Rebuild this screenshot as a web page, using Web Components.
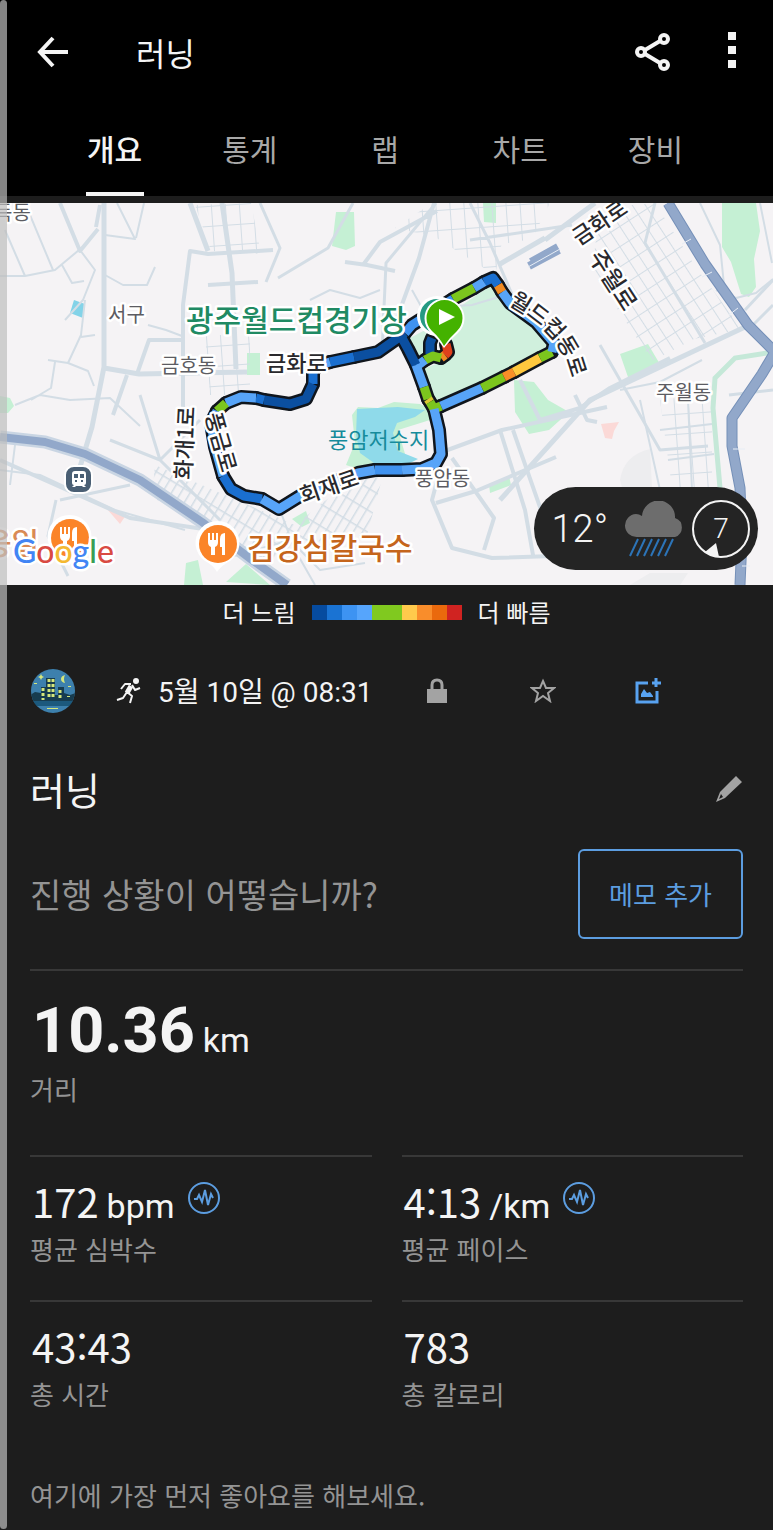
<!DOCTYPE html>
<html lang="ko">
<head>
<meta charset="utf-8">
<meta name="viewport" content="width=device-width, initial-scale=1">
<title>러닝</title>
<style>
  body {
    margin: 0;
    background: #1d1d1d;
    color: #f4f4f4;
    font-family: "Noto Sans CJK KR", "Noto Sans", sans-serif;
  }
</style>
</head>
<body>
<activity-page></activity-page>

<script>
class AppBar extends HTMLElement {
  constructor() {
    super();
    this.attachShadow({ mode: 'open' });
    this.render();
  }

  render() {
    this.shadowRoot.innerHTML = /* html */ `
    <style>
      :host { display: flex; align-items: center; height: 104px; padding: 0 21px 0 32px; }
      button { display: flex; justify-content: center; padding: 0; border: 0; background: none; color: #f4f4f4; }
      h1 { flex: 1; margin: 0 0 0 62px; font-size: 32px; line-height: 44px; font-weight: 400; }
      .actions { display: flex; gap: 40px; }
      .more { width: 40px; }
    </style>
    <button aria-label="뒤로">
      <svg width="42" height="36" viewBox="0 0 42 36" fill="none" stroke="currentColor" stroke-width="4"><path d="M36 18H9M21 4 8 18l13 14"/></svg>
    </button>
    <h1><slot></slot></h1>
    <div class="actions">
      <button aria-label="공유">
        <svg width="38" height="40" viewBox="0 0 38 40" fill="none" stroke="currentColor" stroke-width="4"><path d="M11 18 26 9M11 22l15 9"/><circle cx="7" cy="20" r="4"/><circle cx="30" cy="7" r="4"/><circle cx="30" cy="33" r="4"/></svg>
      </button>
      <button class="more" aria-label="더보기">
        <svg width="8" height="36" viewBox="0 0 8 36" fill="currentColor"><path d="M0 0h8v8H0zM0 14h8v8H0zM0 28h8v8H0z"/></svg>
      </button>
    </div>
    `;
  }
}

class TabItem extends HTMLElement {
  constructor() {
    super();
    this.attachShadow({ mode: 'open' });
    this.shadowRoot.innerHTML = /* html */ `
    <style>
      :host { display: flex; justify-content: center; }
      button {
        height: 92px;
        min-width: 58px;
        padding: 0;
        border: 0;
        border-bottom: 4px solid transparent;
        background: none;
        color: #a8a8a8;
        font: 400 30px/44px "Noto Sans CJK KR", sans-serif;
      }
      :host([selected]) button { color: #f4f4f4; border-color: #f4f4f4; font-weight: 500; }
    </style>
    <button><slot></slot></button>
    `;
  }
}

class TabBar extends HTMLElement {
  constructor() {
    super();
    this.attachShadow({ mode: 'open' });
    this.shadowRoot.innerHTML = /* html */ `
    <style>
      :host { display: block; padding: 0 50px 0 47px; }
      nav { display: grid; grid-auto-flow: column; grid-auto-columns: 1fr; }
    </style>
    <nav><slot></slot></nav>
    `;
  }
}

class WeatherBadge extends HTMLElement {
  constructor() {
    super();
    this.attachShadow({ mode: 'open' });
    this.render();
  }

  render() {
    this.shadowRoot.innerHTML = /* html */ `
    <style>
      :host {
        display: flex;
        align-items: center;
        box-sizing: border-box;
        height: 83px;
        padding: 0 8px 0 17px;
        border-radius: 42px;
        background: #242424;
        font-family: Roboto, sans-serif;
      }
      .temp { font-size: 38px; line-height: 44px; font-weight: 300; }
      .cloud { margin: 0 8px 0 16px; }
      .wind { display: grid; place-items: center; font-size: 28px; font-weight: 300; }
      .wind > * { grid-area: 1 / 1; }
    </style>
    <span class="temp">12°</span>
    <svg class="cloud" width="60" height="56" viewBox="0 0 60 56">
      <path fill="#6d6d6d" d="M13 36a11 11 0 0 1-1-23q3 0 6 2a16 16 0 0 1 33 2 10 10 0 0 1 0 19z"/>
      <path stroke="#2c74b8" stroke-width="2" d="m14 38-8 17M21 38l-8 17M28 38l-8 17M35 38l-8 17M42 38l-8 17M49 38l-8 17"/>
    </svg>
    <div class="wind">
      <svg width="58" height="58" viewBox="0 0 58 58"><circle cx="29" cy="29" r="28" fill="none" stroke="#f4f4f4" stroke-width="2"/><path fill="#f4f4f4" d="m24 43-11 9q6 5 14 5z"/></svg>
      <span>7</span>
    </div>
    `;
  }
}

class RouteMap extends HTMLElement {
  constructor() {
    super();
    this.attachShadow({ mode: 'open' });
    this.render();
  }

  // [colour, points] in riding order; the black casing goes under all of them
  get segments() {
    return [
      ['#0b4fa0', '432,338 430,343 430,354'],
      ['#e0401c', '446,344 448,352 445,355'],
      ['#f08a22', '445,355 441,358'],
      ['#7cc61e', '441,358 433,356 425,360'],
      ['#57a4f8', '425,360 417,366'],
      ['#0b4fa0', '402,338 408,349 416,365'],
      ['#57a4f8', '416,365 424,387'],
      ['#7cc61e', '424,387 428,399'],
      ['#d9c832', '428,399 430,402'],
      ['#7cc61e', '430,402 434,409 441,406'],
      ['#57a4f8', '441,406 482,388'],
      ['#7cc61e', '482,388 504,377'],
      ['#f98e28', '504,377 514,372'],
      ['#ffc83e', '514,372 540,358'],
      ['#7cc61e', '540,358 552,352'],
      ['#57a4f8', '552,352 554,343 536,322 510,303 502,292'],
      ['#f08a22', '502,292 498,285'],
      ['#1a6fd0', '498,285 493,278 484,282'],
      ['#57a4f8', '484,282 474,288'],
      ['#7cc61e', '474,288 453,299'],
      ['#3f92f0', '453,299 412,325 405,333'],
      ['#0b4fa0', '405,333 378,352 354,357'],
      ['#1a6fd0', '354,357 330,362'],
      ['#57a4f8', '330,362 317,366 313,372'],
      ['#1a6fd0', '313,372 313,384'],
      ['#0b4fa0', '313,384 306,399 290,404 264,400'],
      ['#1a6fd0', '264,400 256,398'],
      ['#57a4f8', '256,398 241,397 226,403'],
      ['#7cc61e', '226,403 217,411'],
      ['#57a4f8', '217,411 211,423 215,447 223,476'],
      ['#1a6fd0', '223,476 231,489 244,496 262,499'],
      ['#57a4f8', '262,499 279,509 300,496 330,483 358,473 375,470'],
      ['#3f92f0', '375,470 402,470'],
      ['#57a4f8', '402,470 422,469 436,463 441,454 439,430 434,409']
    ];
  }

  render() {
    const line = (colour, points, width) =>
      `<polyline points="${points}" stroke="${colour}" stroke-width="${width}"/>`;
    const casing = this.segments.map(([, points]) => line('#10151c', points, 14)).join('');
    const paint = this.segments.map(([colour, points]) => line(colour, points, 9)).join('');

    this.shadowRoot.innerHTML = /* html */ `
    <style>
      :host { display: block; position: relative; height: 382px; overflow: hidden; background: #f5f3f5; }
      svg.map { display: block; width: 100%; height: 100%; }
      weather-badge { position: absolute; right: 15px; bottom: 15px; }
      text { font-family: "Noto Sans CJK KR", sans-serif; paint-order: stroke; stroke: #fff; stroke-width: 5px; stroke-linejoin: round; }
      .area { font-size: 20px; fill: #5c5c62; }
      .road { font-size: 22px; font-weight: 500; fill: #29292d; }
      .long { font-size: 24px; }
      .place { font-size: 30px; font-weight: 500; }
      .lake { font-size: 22px; fill: #168b9b; stroke: none; }
      .google { font: 500 32px Lato, sans-serif; }
    </style>
    <svg class="map" viewBox="0 203 773 382" preserveAspectRatio="xMidYMid slice" role="img" aria-label="러닝 경로 지도">
      <defs>
        <pattern id="blocks" width="11" height="17" patternUnits="userSpaceOnUse" patternTransform="rotate(-33)"><path d="M0 0h11M0 0v17" fill="none" stroke="#d3dde5" stroke-width="2"/></pattern>
        <pattern id="streets" width="14" height="20" patternUnits="userSpaceOnUse" patternTransform="rotate(-4)"><path d="M0 0h14M0 0v20" fill="none" stroke="#d3dde5" stroke-width="2"/></pattern>
        <pattern id="rows" width="8" height="19" patternUnits="userSpaceOnUse" patternTransform="rotate(31)"><path d="M0 0h8M0 0v19" fill="none" stroke="#d3dde5" stroke-width="3"/></pattern>
        <path id="stadiumRoad" d="M508 304Q542 323 556 343Q567 356 573 384"/>
      </defs>

      <g fill="#c5f0d4">
        <path d="M336 212l18 0 1 34-9 4-14-4zM483 203h13v20l-12-1zM722 203h34l4 28-6 28 2 28-7 10-8-3-10-32-9-15zM620 354l28-10 13 22-32 14zM514 380l20 2 14 18 21 12-20 18-20 4-14-22zM247 353h13v22h-13zM0 396l10 2 4 8-6 7H0zM186 563l12-3 5 25h-19zM226 582l20-18 24 21zM292 519l14-8 4 12-8 4zM489 484l20-8 2 9-21 8z"/>
        <path d="M352 415l6-8 20 1 16-6 26 2 12 6-2 10-32 10 10 34-50 5-12-4 9-22z"/>
        <path fill="#d0f0dd" d="M493 284l14 20 26 20 17 24-114 58-15-36 20-8 9-18-4-28z"/>
        <path fill="#d0f0dd" d="M410 338l17-9 2 23-11 7z"/>
      </g>
      <path fill="#8fdaea" d="M357 409l41-2 27 3-10 7-18 6-4 10 5 18 20 8-8 4h-36l-14-10-4-18z"/>
      <path fill="#83d3e8" d="M74 300l11 4-2 14-13-5z"/>
      <path fill="#fbd9d7" d="M107 509l19 6-6 9zM601 424l18-2-5 9-2 8-7-1z"/>
      <path fill="#ededef" d="M620 480q4-25 30-31l2 38h-30zM630 585l20-12h38l-8 12z"/>

      <path fill="url(#blocks)" d="M600 208l55-5 42 66 45 60-48 10-42 22-60-90z"/>
      <path fill="url(#streets)" d="M195 205l56-2 10 51-50-3zM395 228l37-25 78 2-15 70-60-38zM446 203h104l-18 36-69 12zM660 400l52-6v94h-40zM205 335h45v60h-40z"/>
      <path fill="url(#rows)" d="M155 465l140 60 60-48 28-2-16 60-60 8-40 20-115-66z"/>

      <g fill="none" stroke="#d3dde5" stroke-linejoin="round">
        <path stroke-width="5" d="M104 203v164l-12 60-12 40M104 368l35 6 108-2M190 203l18 48M222 203l10 70 4 96M545 238l-45 26M545 240l50-37M500 500l90-100 85-40 70-33"/>
        <path stroke-width="4" d="M60 203l20 48 18-22M183 420v-115l7-54 18 3 65-4M208 285l50-3M183 340h-34l-12 34M127 375l-14 40M100 205l-4 22M434 203l-15 55-22 60M345 262l22 3 28 6M363 265l17-23 57-31M0 460l130 58 80 12M434 455l68-25 105-23M436 503l40-12 80-34M440 470l-8 30 20 48 40 10 181-6M452 458l42 60-10 32M500 430l25 80 8 45M513 430l35 100M520 380l20 40 40-12 30-20 60-30M575 395l12 25 10 2"/>
        <path stroke-width="3" d="M436 203l-50 60-4 90M470 203l20 40 30 70M470 240l102-15M600 345l60 105 48-4M655 203l-10 40 60 100M773 280l-28 30M748 330l25-25M773 390l-44 5M140 395l20 65 60 60M110 440l50 20 40-40M60 500l70-15M56 500l-8 36 20 40M260 203l20 45-14 34M278 278l50-30 25-45"/>
        <path stroke-width="2" d="M0 276l25 0 30-6 30-25M25 203l28 67M25 276L5 230M80 250l15 20-12 30-18 20M85 300l-4 35-13 28M48 360l20 3 20 8 6 15M55 362l-4 26-20 12M95 335l-14 2M62 265l10 18 12-2M105 275l18 10 24 0 8-18M105 235l30 4-18-36M136 238l8-35M148 325l18 5 16 6M310 300l20-10 30 8 20-8M15 405l25-10 30 5 40-2 30 28M0 470l40 5 75 35 70 20M15 445l-5 40M280 510l15 40 20 35M220 560l70-20 30 30 45-7M412 290l10 18 50-3 40-12M620 390l40-8 42-22M640 400l20 90M668 460l46-6M660 430l52-6M688 400l4 90M760 203l12 60M700 203l20 42 4 40M716 290l20 8 20-5 17-14"/>
      </g>
      <path fill="none" stroke="#c5e8d8" stroke-width="5" d="M773 352l-38 6-20 20-2 30 7 80"/>
      <g fill="none" stroke-linejoin="round">
        <path stroke="#c9d5e3" stroke-width="13" d="M0 437l45 5 40 12 55 26 62 42 50 38 35 25"/>
        <path stroke="#92a8ca" stroke-width="8" d="M0 437l45 5 40 12 55 26 62 42 50 38 35 25M529 266l30-16M531 262l27-15"/>
        <path stroke="#7590b8" stroke-width="11" d="M668 203l37 61 43 61 27 27-13 22-30 44 0 28 8 42 2 50-2 47"/>
        <path stroke="#92a8ca" stroke-width="9" d="M668 203l37 61 43 61 27 27-13 22-30 44 0 28 8 42 2 50-2 47"/>
        <path stroke="#e7edf5" stroke-width="1" d="M682 244l9-5M702 277l10-5M729 315l9-7M528 267l32-18M733 449h12M742 566h8"/>
      </g>

      <text class="lake" x="328" y="448">풍암저수지</text>
      <g fill="none" stroke-linejoin="round" stroke-linecap="round">${casing}</g>
      <g fill="none" stroke-linejoin="round">${paint}</g>

      <text class="area" x="-6" y="220">득동</text>
      <text class="area" x="108" y="322">서구</text>
      <text class="area" x="161" y="373">금호동</text>
      <text class="area" x="656" y="400">주월동</text>
      <text class="area" x="415" y="486">풍암동</text>
      <text class="road" x="266" y="371">금화로</text>
      <text class="road" transform="translate(191 480) rotate(-87)">화개1로</text>
      <text class="road" transform="translate(205 415) rotate(74)">풍금로</text>
      <text class="road" transform="translate(303 504) rotate(-19)">회재로</text>
      <text class="road" transform="translate(579 246) rotate(-34)">금화로</text>
      <text class="road long" transform="translate(588 257) rotate(57)">주월로</text>
      <text class="road"><textPath href="#stadiumRoad">월드컵동로</textPath></text>
      <text class="place" fill="#208a63" x="186" y="331">광주월드컵경기장</text>
      <text class="place" fill="#c5651c" x="247" y="559">김강심칼국수</text>
      <text class="place" fill="#d98a55" x="-16" y="554">웅일</text>

      <!-- station -->
      <rect x="65" y="466" width="27" height="27" rx="9" fill="#4a5f74" stroke="#fff" stroke-width="2"/>
      <path fill="#fff" fill-rule="evenodd" d="M75 471h8q3 0 3 3v9q0 2-2 2l2 2h-3l-1-1h-6l-1 1h-3l2-2q-2 0-2-2v-9q0-3 3-3zM74 474v4h4v-4zM80 474v4h4v-4zM75 480v2h2v-2zM81 480v2h2v-2z"/>

      <!-- restaurants -->
      <g id="food">
        <path fill="#fff" d="M217 572q-4-7-12-11a22 22 0 1 1 25 0q-8 4-13 11z"/>
        <circle cx="218" cy="544" r="19" fill="#fb8428"/>
        <path fill="#fff" d="M208 533h2v7h2v-7h2v7h2v-7h2v9q0 4-3 5v8h-4v-8q-3-1-3-5zM225 533v22h-3v-8h-2v-8q0-6 5-6z"/>
      </g>
      <use href="#food" x="-148" y="-6"/>
      <text class="google" x="13" y="563"><tspan fill="#4285f4">G</tspan><tspan fill="#d94a42">o</tspan><tspan fill="#f4b932">o</tspan><tspan fill="#4285f4">g</tspan><tspan fill="#3a9e54">l</tspan><tspan fill="#d94a42">e</tspan></text>

      <!-- start pin over the stadium pin -->
      <circle cx="437" cy="316" r="20" fill="#fff"/>
      <circle cx="437" cy="316" r="17" fill="#259a83"/>
      <path fill="#fff" d="M444 348q-5-8-13-15a20 20 0 1 1 27 0q-8 7-14 15z"/>
      <path fill="#44b200" d="M444 346q-4-8-12-15a18 18 0 1 1 25 0q-8 7-13 15z"/>
      <path fill="#fff" d="M439 309l16 8-16 8z"/>
    </svg>
    <weather-badge></weather-badge>
    `;
  }
}

class PaceLegend extends HTMLElement {
  constructor() {
    super();
    this.attachShadow({ mode: 'open' });
    const colours = ['#064b9f', '#1a73d3', '#3d93f2', '#56a5fc', '#80c91f', '#80c91f', '#ffca4c', '#f98d2b', '#ea690d', '#d02321'];
    this.shadowRoot.innerHTML = /* html */ `
    <style>
      :host { display: flex; justify-content: center; align-items: center; gap: 16px; height: 54px; font-size: 24px; line-height: 36px; }
      .bar { display: flex; }
      i { width: 15px; height: 15px; }
    </style>
    <slot name="slow"></slot>
    <div class="bar">${colours.map(c => `<i style="background:${c}"></i>`).join('')}</div>
    <slot name="fast"></slot>
    `;
  }
}

class ActivityMeta extends HTMLElement {
  constructor() {
    super();
    this.attachShadow({ mode: 'open' });
    this.render();
  }

  render() {
    this.shadowRoot.innerHTML = /* html */ `
    <style>
      :host { display: flex; align-items: center; height: 104px; }
      .run { margin: 0 16px 0 40px; }
      time { padding-top: 4px; font: 400 28px/40px Roboto, "Noto Sans CJK KR", sans-serif; white-space: nowrap; }
      .actions { flex: 1; display: grid; grid-template-columns: repeat(3, 1fr); margin: 0 42px 0 12px; }
      button { display: flex; justify-content: center; padding: 0; border: 0; background: none; color: #a3a3a3; }
      .photo { color: #58a2f0; }
    </style>
    <svg width="46" height="46" viewBox="0 0 46 46" role="img" aria-label="프로필">
      <clipPath id="round"><circle cx="23" cy="23" r="22"/></clipPath>
      <g clip-path="url(#round)">
        <path fill="#3d80ad" d="M0 0h46v46H0z"/>
        <path fill="#173c4f" d="M0 27l5-3 6 1v-6h5V10h9v17h3v-8h6v6l6 2 6-2v13H0z"/>
        <path fill="#1c597d" d="M0 33h46v5H0z"/>
        <path stroke="#d5e77c" stroke-width="3" stroke-dasharray="3 2" d="M19 11v20M23 11v20M13 20v12M30 22v10"/>
        <path fill="#d5e77c" d="M35 7q-4 1-4 4t4 4q-2-4 0-8zM11 6l1 2 2 1-2 1-1 2-1-2-2-1 2-1zM4 15h3v1H4zM38 18h3v1h-3zM17 40h11v1H17zM37 28h3v1h-3z"/>
      </g>
    </svg>
    <svg class="run" width="26" height="28" viewBox="0 0 26 28">
      <circle cx="20" cy="4" r="3" fill="#f4f4f4"/>
      <path fill="none" stroke="#f4f4f4" stroke-width="5" stroke-linejoin="round" d="m15 9-4 7"/>
      <path fill="none" stroke="#f4f4f4" stroke-width="2" stroke-linejoin="round" d="M15 7H9l-4 5M16 8l3 5 5-2M11 15l-4 6-6 2M11 15l5 4-2 7"/>
    </svg>
    <time><slot></slot></time>
    <div class="actions">
      <button aria-label="비공개"><svg width="22" height="28" viewBox="0 0 22 28"><path fill="currentColor" d="M1 12h20v14H1z"/><path fill="none" stroke="currentColor" stroke-width="3" d="M6 12V8q0-5 5-5t5 5v4"/></svg></button>
      <button aria-label="즐겨찾기"><svg width="26" height="26" viewBox="0 0 26 26"><path fill="none" stroke="currentColor" stroke-width="2" d="m13 4 3 7 8 0-6 5 2 8-7-5-7 5 2-8-6-5 8 0z"/></svg></button>
      <button class="photo" aria-label="사진 추가"><svg width="28" height="28" viewBox="0 0 28 28" fill="none" stroke="currentColor" stroke-width="2"><path stroke-width="3" d="M14 6H3v19h20V14M18 6h9M22 1v9"/><path fill="currentColor" stroke="none" d="M7 20v-3l3-5 3 4 3-1 3 4v1z"/></svg></button>
    </div>
    `;
  }
}

class ActivityTitle extends HTMLElement {
  constructor() {
    super();
    this.attachShadow({ mode: 'open' });
    this.shadowRoot.innerHTML = /* html */ `
    <style>
      :host { display: flex; align-items: center; justify-content: space-between; height: 92px; }
      h2 { margin: 0; font-size: 38px; line-height: 56px; font-weight: 400; }
      button { display: flex; padding: 0; border: 0; background: none; color: #a3a3a3; }
    </style>
    <h2><slot></slot></h2>
    <button aria-label="이름 편집"><svg width="28" height="28" viewBox="0 0 28 28"><path fill="currentColor" fill-rule="evenodd" d="M21 1l6 6L10 23 1 27l4-10zM6 19l-2 5 4-2z"/></svg></button>
    `;
  }
}

class NotePrompt extends HTMLElement {
  constructor() {
    super();
    this.attachShadow({ mode: 'open' });
    this.shadowRoot.innerHTML = /* html */ `
    <style>
      :host { display: flex; align-items: center; justify-content: space-between; padding: 14px 0 30px; }
      p { margin: 0; color: #949494; font-size: 34px; line-height: 48px; }
      button {
        height: 90px;
        padding: 0 29px;
        border: 2px solid #5c9de0;
        border-radius: 6px;
        background: none;
        color: #5c9de0;
        font: 400 26px/36px "Noto Sans CJK KR", sans-serif;
      }
    </style>
    <p><slot></slot></p>
    <button><slot name="action"></slot></button>
    `;
  }
}

class MetricCard extends HTMLElement {
  constructor() {
    super();
    this.attachShadow({ mode: 'open' });
    this.render();
  }

  render() {
    const unit = this.getAttribute('unit');
    const pulse = this.hasAttribute('pulse') ? /* html */ `
      <button aria-label="그래프 보기"><svg width="34" height="34" viewBox="0 0 34 34" fill="none" stroke="#5c9de0" stroke-width="2"><circle cx="17" cy="17" r="15"/><path d="M7 18h3l2-4 3 7 3-12 3 15 3-11 2 4"/></svg></button>` : '';

    this.shadowRoot.innerHTML = /* html */ `
    <style>
      :host { display: block; box-sizing: border-box; height: 145px; padding: 16px 0 0; border-top: 2px solid #383838; }
      .value { display: flex; align-items: baseline; gap: 8px; height: 58px; padding-left: 2px; font-size: 40px; line-height: 56px; }
      .unit { font: 400 34px/44px Roboto, sans-serif; }
      .label { color: #949494; font-size: 26px; line-height: 36px; }
      button { align-self: center; display: flex; margin: 0 0 8px 4px; padding: 0; border: 0; background: none; }
      :host([large]) { height: 186px; padding-top: 20px; }
      :host([large]) .value { height: 80px; font: 700 63px/80px Roboto, sans-serif; }
    </style>
    <div class="value"><slot></slot>${unit ? `<span class="unit">${unit}</span>` : ''}${pulse}</div>
    <div class="label"><slot name="label"></slot></div>
    `;
  }
}

class ActivityPage extends HTMLElement {
  constructor() {
    super();
    this.attachShadow({ mode: 'open' });
    this.render();
  }

  render() {
    this.shadowRoot.innerHTML = /* html */ `
    <style>
      :host { display: block; position: relative; }
      header { background: #000; margin-bottom: 7px; }
      main { padding: 0 30px; }
      .metrics { display: grid; grid-template-columns: 1fr 1fr; column-gap: 30px; }
      .metrics [large] { grid-column: 1 / -1; }
      .likes { margin: 0; padding: 32px 0 16px; color: #949494; font-size: 26px; line-height: 36px; }
      .edge { position: absolute; top: 0; bottom: 0; left: 0; width: 7px; border-radius: 4px; background: rgba(190, 190, 190, .7); }
    </style>
    <header>
      <app-bar>러닝</app-bar>
      <tab-bar>
        <tab-item selected>개요</tab-item>
        <tab-item>통계</tab-item>
        <tab-item>랩</tab-item>
        <tab-item>차트</tab-item>
        <tab-item>장비</tab-item>
      </tab-bar>
    </header>
    <route-map></route-map>
    <pace-legend><span slot="slow">더 느림</span><span slot="fast">더 빠름</span></pace-legend>
    <main>
      <activity-meta>5월 10일 @ 08:31</activity-meta>
      <activity-title>러닝</activity-title>
      <note-prompt>진행 상황이 어떻습니까?<span slot="action">메모 추가</span></note-prompt>
      <section class="metrics">
        <metric-card large unit="km">10.36<span slot="label">거리</span></metric-card>
        <metric-card unit="bpm" pulse>172<span slot="label">평균 심박수</span></metric-card>
        <metric-card unit="/km" pulse>4:13<span slot="label">평균 페이스</span></metric-card>
        <metric-card>43:43<span slot="label">총 시간</span></metric-card>
        <metric-card>783<span slot="label">총 칼로리</span></metric-card>
      </section>
      <p class="likes">여기에 가장 먼저 좋아요를 해보세요.</p>
    </main>
    <div class="edge"></div>
    `;
  }
}

customElements.define('app-bar', AppBar);
customElements.define('tab-item', TabItem);
customElements.define('tab-bar', TabBar);
customElements.define('weather-badge', WeatherBadge);
customElements.define('route-map', RouteMap);
customElements.define('pace-legend', PaceLegend);
customElements.define('activity-meta', ActivityMeta);
customElements.define('activity-title', ActivityTitle);
customElements.define('note-prompt', NotePrompt);
// metric-card reads its attributes in the constructor, so it is upgraded from parsed markup
customElements.define('metric-card', MetricCard);
customElements.define('activity-page', ActivityPage);
</script>
</body>
</html>
